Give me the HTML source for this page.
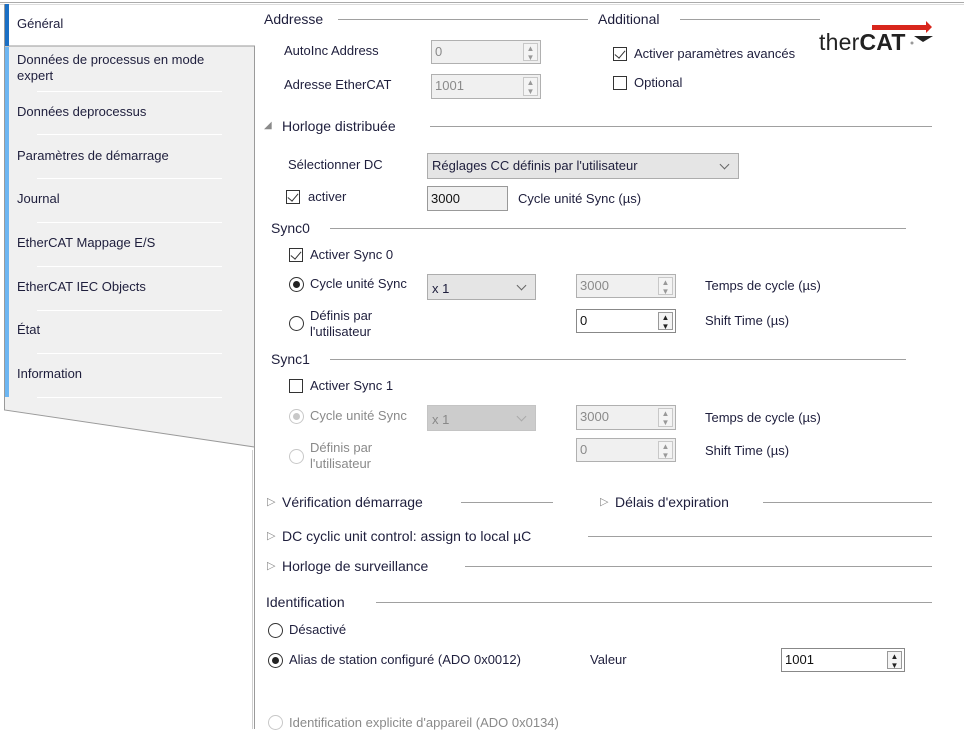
<!DOCTYPE html>
<html><head><meta charset="utf-8"><style>
*{margin:0;padding:0;box-sizing:border-box}
body{width:964px;height:729px;background:#fff;position:relative;overflow:hidden;font-family:Tahoma,"Liberation Sans","DejaVu Sans",sans-serif;font-size:13px;color:#1e1e3c}
.t{position:absolute;line-height:16px;white-space:nowrap}
.h{font-size:14px}
.g{color:#8a8a8a}
.ln{position:absolute;height:1px;background:#a0a0a0}
.cb{position:absolute;width:14px;height:14px;border:1px solid #333;background:#fff}
.cb.k::after{content:"";position:absolute;left:3px;top:0px;width:5px;height:9px;border:solid #333;border-width:0 1.5px 1.5px 0;transform:rotate(40deg)}
.rd{position:absolute;width:15px;height:15px;border:1px solid #333;border-radius:50%;background:#fff}
.rd.k::after{content:"";position:absolute;left:3px;top:3px;width:7px;height:7px;border-radius:50%;background:#222}
.rd.d{border-color:#c8c8c8}
.rd.d.k::after{background:#c8c8c8}
.sp{position:absolute;border:1px solid #b0b0b0;background:#f0f0f0;padding-left:3px;line-height:21px;color:#8a8a8a}
.sp.e{background:#fff;color:#111;border-color:#888}
.sp b{position:absolute;right:2px;top:2px;bottom:2px;width:15px;border:1px solid #c8c8c8;background:#f4f4f4;font-size:8px;line-height:9px;text-align:center;color:#999;font-weight:normal}
.sp.e b{color:#222;border-color:#999}
.cm{position:absolute;border:1px solid #adadad;background:#e5e5e5;padding-left:4px;line-height:24px}
.cm i{position:absolute;right:10px;top:7px;width:7px;height:7px;border:solid #666;border-width:0 1px 1px 0;transform:rotate(45deg)}
.tab{position:absolute;left:17px;line-height:16px;font-size:13px}
.sep{position:absolute;left:37px;width:185px;height:1px;background:#fff}
.bar{position:absolute;left:5px;width:4px;background:#6db6f2}
</style></head><body>
<div style="position:absolute;left:0;top:2px;width:964px;height:1px;background:#aaa"></div>
<div style="position:absolute;left:0;top:4px;width:964px;height:1px;background:#ddd"></div>
<svg style="position:absolute;left:0;top:0" width="260" height="729">
<polygon points="4.5,46 254.5,46 254.5,447 4.5,410" fill="#f0f0f0" stroke="#9a9a9a"/>
<line x1="4.5" y1="4" x2="4.5" y2="46" stroke="#9a9a9a"/>
<line x1="254.5" y1="447" x2="254.5" y2="729" stroke="#9a9a9a"/>
<line x1="252.5" y1="450" x2="252.5" y2="729" stroke="#d0d0d0"/>
</svg>
<div class="bar" style="top:4px;height:42px;background:#1a6fc4"></div>
<div class="bar" style="top:47px;height:350px"></div>
<div class="tab" style="top:16px">Général</div>
<div class="tab" style="top:52px">Données de processus en mode<br>expert</div>
<div class="sep" style="top:91px"></div>
<div class="tab" style="top:104px">Données deprocessus</div>
<div class="sep" style="top:134px"></div>
<div class="tab" style="top:148px">Paramètres de démarrage</div>
<div class="sep" style="top:178px"></div>
<div class="tab" style="top:191px">Journal</div>
<div class="sep" style="top:222px"></div>
<div class="tab" style="top:235px">EtherCAT Mappage E/S</div>
<div class="sep" style="top:266px"></div>
<div class="tab" style="top:279px">EtherCAT IEC Objects</div>
<div class="sep" style="top:310px"></div>
<div class="tab" style="top:322px">État</div>
<div class="sep" style="top:353px"></div>
<div class="tab" style="top:366px">Information</div>
<div class="sep" style="top:397px"></div>

<div class="t h" style="left:264px;top:11px">Addresse</div><div class="ln" style="left:338px;top:19px;width:250px"></div>
<div class="t h" style="left:598px;top:11px">Additional</div><div class="ln" style="left:680px;top:19px;width:140px"></div>
<div class="t" style="left:284px;top:43px">AutoInc Address</div>
<div class="sp" style="left:431px;top:40px;width:110px;height:24px">0<b>▲<br>▼</b></div>
<div class="t" style="left:284px;top:77px">Adresse EtherCAT</div>
<div class="sp" style="left:431px;top:74px;width:110px;height:25px">1001<b>▲<br>▼</b></div>
<div class="cb k" style="left:613px;top:47px"></div><div class="t" style="left:634px;top:46px">Activer paramètres avancés</div>
<div class="cb" style="left:613px;top:76px"></div><div class="t" style="left:634px;top:75px">Optional</div>
<div class="t" style="left:819px;top:29px;font-size:23px;line-height:26px;color:#222;font-family:'Liberation Sans',sans-serif;letter-spacing:0.2px">ther<b>CAT</b></div>
<svg style="position:absolute;left:866px;top:20px" width="70" height="28"><path d="M6 5 H60 V1 L66 7 L60 13 V10 H6Z" fill="#d8261c"/><path d="M48 16 H67 L57 22Z" fill="#222"/><circle cx="46" cy="23" r="1.5" fill="#999"/></svg>

<div class="t g" style="left:264px;top:118px;font-size:10px">◢</div>
<div class="t h" style="left:282px;top:118px">Horloge distribuée</div><div class="ln" style="left:430px;top:126px;width:502px"></div>
<div class="t" style="left:288px;top:157px">Sélectionner DC</div>
<div class="cm" style="left:427px;top:153px;width:312px;height:26px">Réglages CC définis par l'utilisateur<i></i></div>
<div class="cb k" style="left:286px;top:190px"></div><div class="t" style="left:308px;top:189px">activer</div>
<div style="position:absolute;left:427px;top:186px;width:81px;height:25px;border:1px solid #999;background:#f0f0f0;padding-left:3px;line-height:23px;color:#111">3000</div>
<div class="t" style="left:518px;top:191px">Cycle unité Sync (µs)</div>

<div class="t h" style="left:271px;top:220px">Sync0</div><div class="ln" style="left:330px;top:228px;width:576px"></div>
<div class="cb k" style="left:289px;top:248px"></div><div class="t" style="left:310px;top:247px">Activer Sync 0</div>
<div class="rd k" style="left:289px;top:277px"></div><div class="t" style="left:310px;top:276px">Cycle unité Sync</div>
<div class="cm" style="left:427px;top:274px;width:109px;height:26px;padding-top:2px">x 1<i></i></div>
<div class="sp" style="left:576px;top:274px;width:100px;height:24px">3000<b>▲<br>▼</b></div>
<div class="t" style="left:705px;top:278px">Temps de cycle (µs)</div>
<div class="rd" style="left:289px;top:316px"></div><div class="t" style="left:310px;top:308px;line-height:16px">Définis par<br>l'utilisateur</div>
<div class="sp e" style="left:576px;top:309px;width:100px;height:24px">0<b>▲<br>▼</b></div>
<div class="t" style="left:705px;top:313px">Shift Time (µs)</div>

<div class="t h" style="left:271px;top:351px">Sync1</div><div class="ln" style="left:330px;top:359px;width:576px"></div>
<div class="cb" style="left:289px;top:379px"></div><div class="t" style="left:310px;top:378px">Activer Sync 1</div>
<div class="rd d k" style="left:289px;top:409px"></div><div class="t g" style="left:310px;top:408px">Cycle unité Sync</div>
<div class="cm" style="left:427px;top:405px;width:109px;height:26px;background:#cccccc;border-color:#c4c4c4;color:#888;padding-top:2px">x 1<i style="border-color:#aaa"></i></div>
<div class="sp" style="left:576px;top:405px;width:100px;height:25px">3000<b>▲<br>▼</b></div>
<div class="t" style="left:705px;top:410px">Temps de cycle (µs)</div>
<div class="rd d" style="left:289px;top:449px"></div><div class="t g" style="left:310px;top:440px">Définis par<br>l'utilisateur</div>
<div class="sp" style="left:576px;top:438px;width:100px;height:24px">0<b>▲<br>▼</b></div>
<div class="t" style="left:705px;top:443px">Shift Time (µs)</div>

<div class="t g" style="left:267px;top:494px;font-size:11px">▷</div>
<div class="t h" style="left:282px;top:494px">Vérification démarrage</div><div class="ln" style="left:461px;top:502px;width:92px"></div>
<div class="t g" style="left:600px;top:494px;font-size:11px">▷</div>
<div class="t h" style="left:615px;top:494px">Délais d'expiration</div><div class="ln" style="left:763px;top:502px;width:169px"></div>
<div class="t g" style="left:267px;top:528px;font-size:11px">▷</div>
<div class="t h" style="left:282px;top:528px">DC cyclic unit control: assign to local µC</div><div class="ln" style="left:588px;top:536px;width:344px"></div>
<div class="t g" style="left:267px;top:558px;font-size:11px">▷</div>
<div class="t h" style="left:282px;top:558px">Horloge de surveillance</div><div class="ln" style="left:465px;top:566px;width:467px"></div>

<div class="t h" style="left:266px;top:594px">Identification</div><div class="ln" style="left:376px;top:602px;width:556px"></div>
<div class="rd" style="left:268px;top:623px"></div><div class="t" style="left:289px;top:622px">Désactivé</div>
<div class="rd k" style="left:268px;top:653px"></div><div class="t" style="left:289px;top:652px">Alias de station configuré (ADO 0x0012)</div>
<div class="t" style="left:590px;top:652px">Valeur</div>
<div class="sp e" style="left:781px;top:648px;width:124px;height:24px">1001<b>▲<br>▼</b></div>
<div class="rd d" style="left:268px;top:715px"></div><div class="t g" style="left:289px;top:715px">Identification explicite d'appareil (ADO 0x0134)</div>
</body></html>
